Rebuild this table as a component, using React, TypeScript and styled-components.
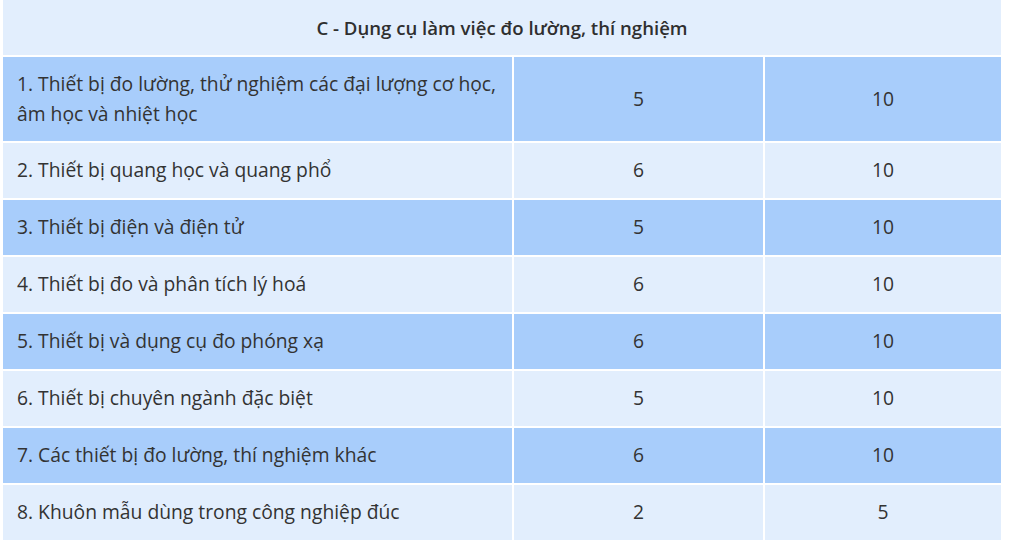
import React from "react";
import styled, { createGlobalStyle } from "styled-components";

const GlobalStyle = createGlobalStyle`
  html, body {
    margin: 0;
    padding: 0;
    background: #ffffff;
  }
  body {
    font-family: "Open Sans", "Noto Sans", sans-serif;
    color: #333333;
  }
`;

const Table = styled.div`
  display: grid;
  grid-template-columns: 509px 249px 236px;
  gap: 2px;
  padding-left: 3px;
  width: 998px;
`;

const HeaderCell = styled.div`
  grid-column: 1 / span 3;
  height: 55px;
  background: #e2eefd;
  display: flex;
  align-items: center;
  justify-content: center;
  font-size: 18.6px;
  font-weight: 600;
  color: #2f2f2f;
  padding-bottom: 1px;
  box-sizing: border-box;
`;

const Cell = styled.div<{ $dark: boolean; $center?: boolean; $tall?: boolean }>`
  background: ${(p) => (p.$dark ? "#a8cdfb" : "#e2eefd")};
  min-height: ${(p) => (p.$tall ? "84px" : "55px")};
  box-sizing: border-box;
  padding: 0 14px 1px;
  display: flex;
  align-items: center;
  justify-content: ${(p) => (p.$center ? "center" : "flex-start")};
  font-size: 19.3px;
  line-height: 30px;
  color: #333333;
`;

const rows: { label: React.ReactNode; a: string; b: string; tall?: boolean }[] = [
  {
    label: (
      <span>
        1. Thiết bị đo lường, thử nghiệm các đại lượng cơ học,
        <br />
        âm học và nhiệt học
      </span>
    ),
    a: "5",
    b: "10",
    tall: true,
  },
  { label: "2. Thiết bị quang học và quang phổ", a: "6", b: "10" },
  { label: "3. Thiết bị điện và điện tử", a: "5", b: "10" },
  { label: "4. Thiết bị đo và phân tích lý hoá", a: "6", b: "10" },
  { label: "5. Thiết bị và dụng cụ đo phóng xạ", a: "6", b: "10" },
  { label: "6. Thiết bị chuyên ngành đặc biệt", a: "5", b: "10" },
  { label: "7. Các thiết bị đo lường, thí nghiệm khác", a: "6", b: "10" },
  { label: "8. Khuôn mẫu dùng trong công nghiệp đúc", a: "2", b: "5" },
];

const App: React.FC = () => {
  return (
    <>
      <GlobalStyle />
      <Table>
        <HeaderCell>C - Dụng cụ làm việc đo lường, thí nghiệm</HeaderCell>
        {rows.map((r, i) => {
          const dark = i % 2 === 0;
          return (
            <React.Fragment key={i}>
              <Cell $dark={dark} $tall={r.tall}>
                {r.label}
              </Cell>
              <Cell $dark={dark} $tall={r.tall} $center>
                {r.a}
              </Cell>
              <Cell $dark={dark} $tall={r.tall} $center>
                {r.b}
              </Cell>
            </React.Fragment>
          );
        })}
      </Table>
    </>
  );
};

export default App;
